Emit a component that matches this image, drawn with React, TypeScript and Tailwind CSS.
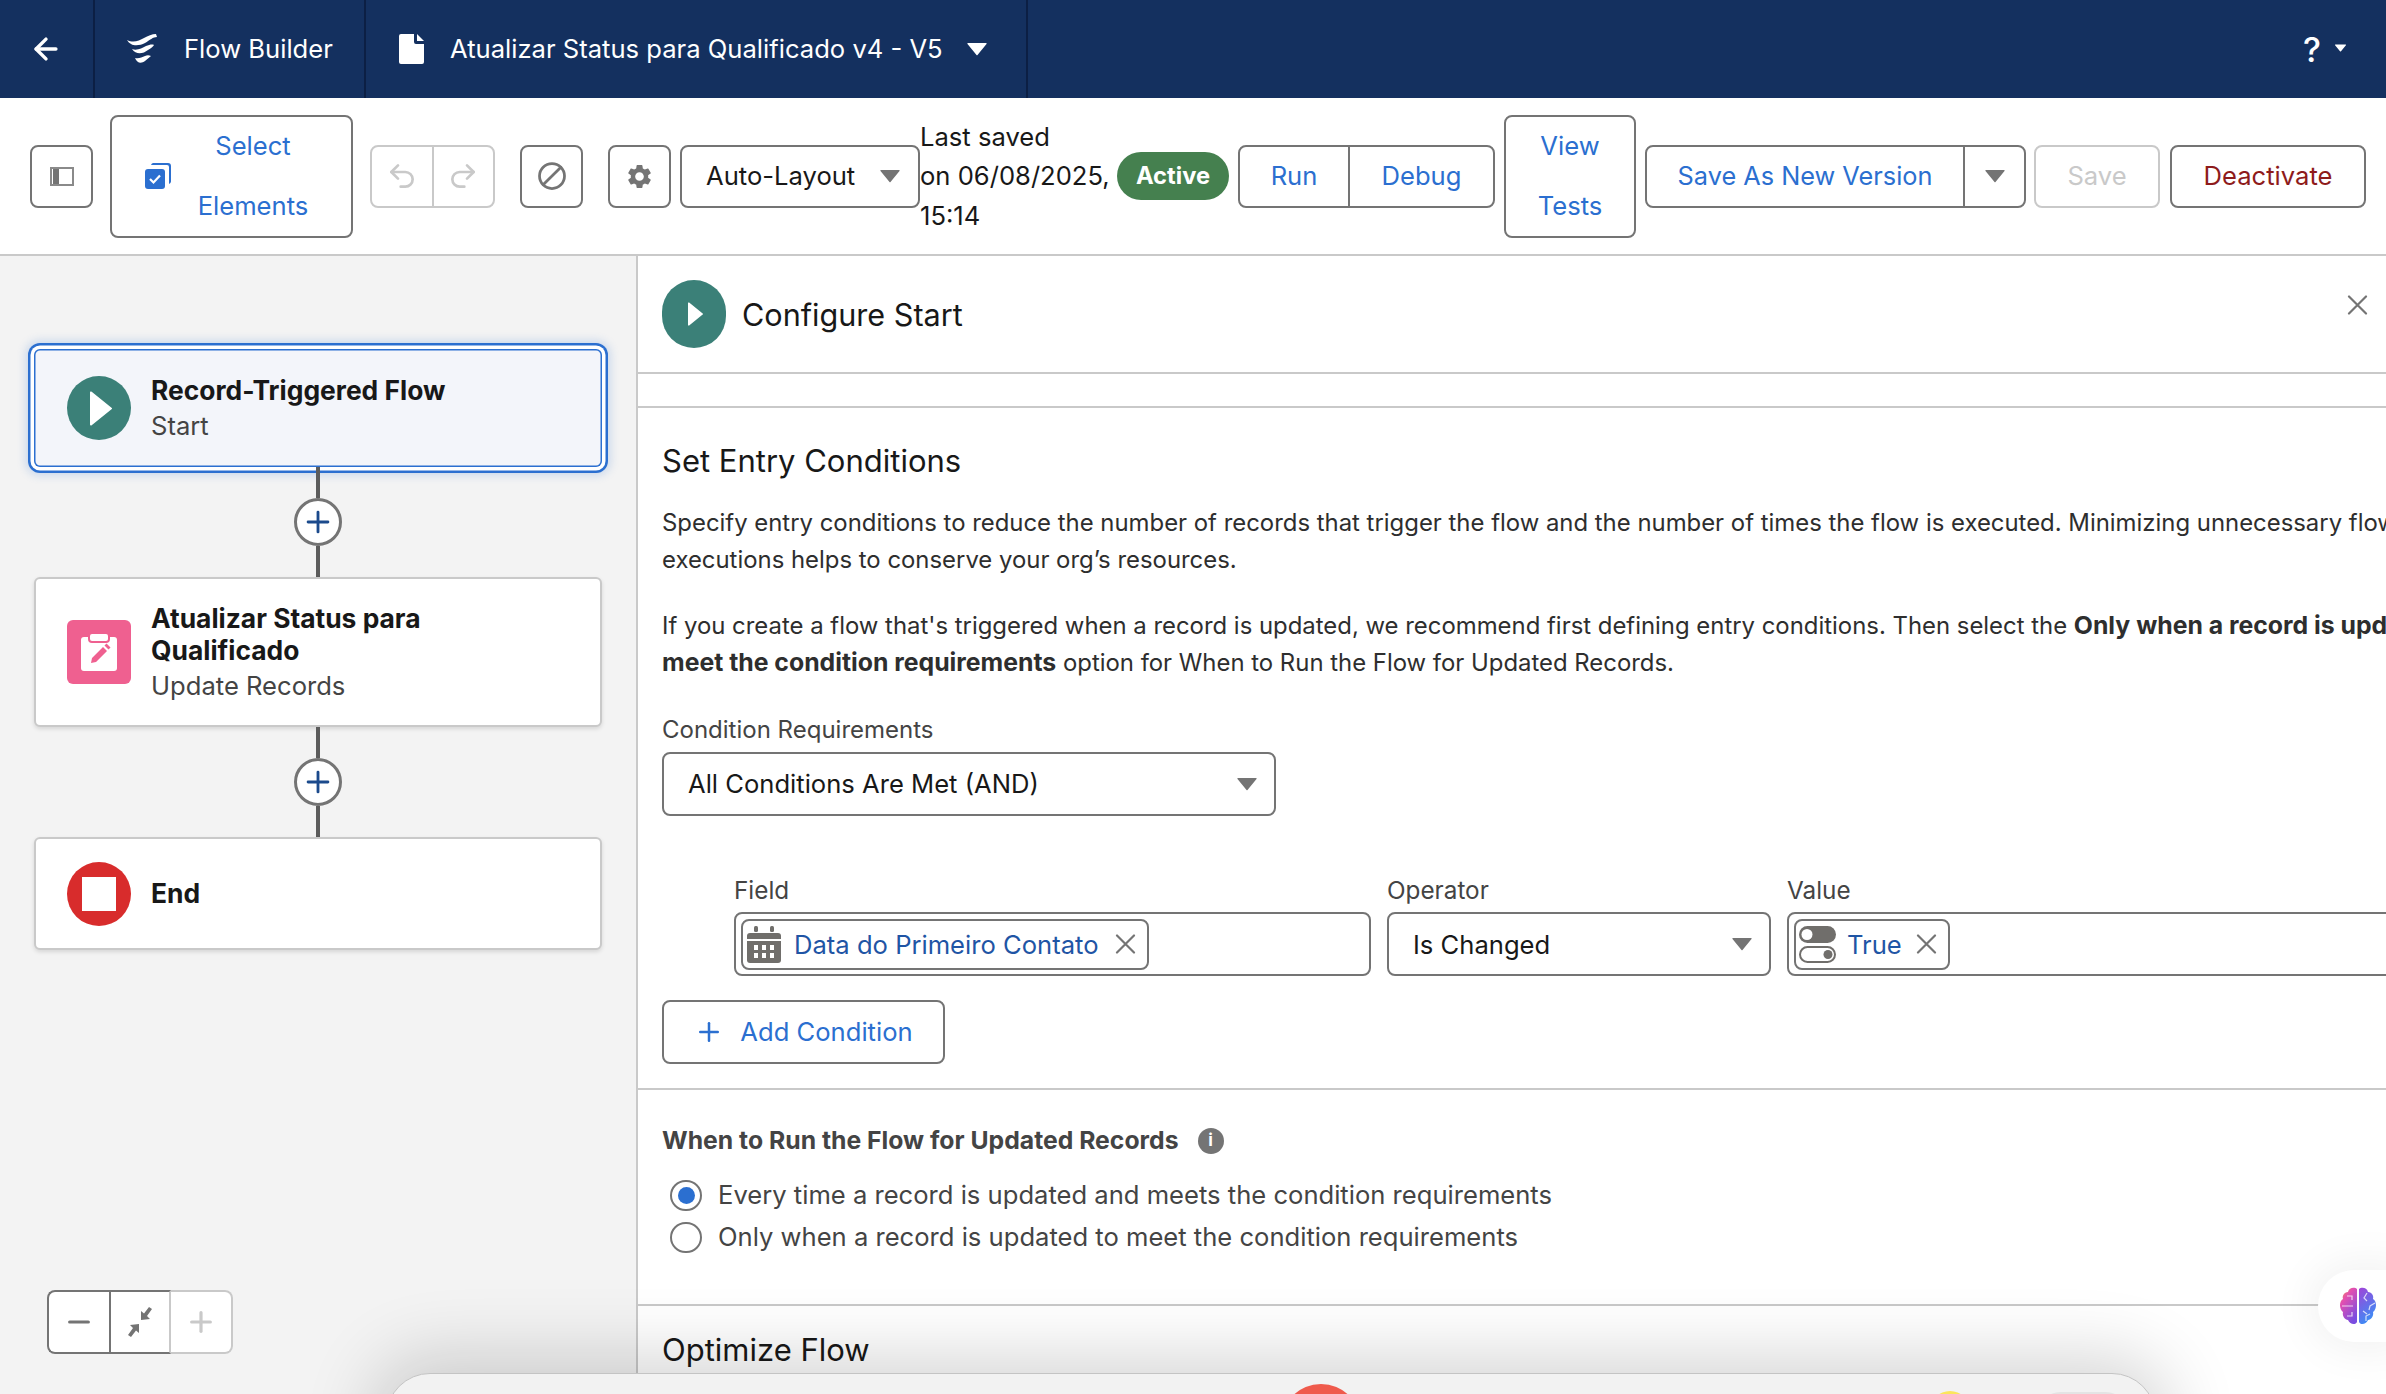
import { ArrowLeft, Ban, Minus, Plus, Redo2, Undo2 } from 'lucide-react'
import { MdSettings } from 'react-icons/md'

const BOX = 'flex items-center rounded-[8px] border-2 border-[#747474] bg-white'
const BTN = `${BOX} justify-center`

function Caret({ className }: { className: string }) {
  return (
    <svg viewBox="0 0 20 14" className={className} fill="currentColor">
      <path d="M1 1h18a.6.6 0 0 1 .5 1L10.500 13a.7.7 0 0 1-1 0L.5 2A.6.6 0 0 1 1 1z" />
    </svg>
  )
}

function CrossIcon({ className }: { className: string }) {
  return (
    <svg viewBox="0 0 21 20" className={className} fill="none" stroke="#747474" strokeWidth="2.200" strokeLinecap="round">
      <path d="M2 1.500l17 17M19 1.500l-17 17" />
    </svg>
  )
}

function PlayIcon({ className }: { className: string }) {
  return (
    <svg viewBox="0 0 22 35" className={className} fill="white">
      <path d="M0 1.500v32a1 1 0 0 0 1.700.7L21.500 18.300a1 1 0 0 0 0-1.600L1.700.8A1 1 0 0 0 0 1.500z" />
    </svg>
  )
}

function FlowLogo() {
  return (
    <svg viewBox="0 0 30 30" className="h-[30px] w-[30px]" fill="white">
      <path d="M0 6C6 9 12 7 17 4 21 2 25 0 29 0l1 3c-4 0-7 3-12 6C12 12 4 13 0 6z" />
      <path d="M5 15c5 2 10-1 14-3 3-1 6-2 8-1-1 2-3 3-6 5-5 4-12 5-16-1z" />
      <path d="M8 24c4 1 7-1 10-2 2-1 4-1 6 0-2 2-4 3-6 5-4 3-8 2-10-3z" />
    </svg>
  )
}

function AddNode() {
  return (
    <div className="flex flex-col items-center">
      <div className="h-[31px] w-[4px] bg-[#5c5c5c]" />
      <div className="flex size-[48px] items-center justify-center rounded-full border-[3px] border-[#747474] bg-white">
        <Plus className="size-[34px] text-[#1b4a8c]" strokeWidth={2} />
      </div>
      <div className="h-[31px] w-[4px] bg-[#5c5c5c]" />
    </div>
  )
}

function Calendar() {
  return (
    <svg viewBox="0 0 34 37" className="h-[37px] w-[34px] shrink-0" fill="#706e6b">
      <rect x="7" y="0" width="4" height="6" rx="1.5" />
      <rect x="23" y="0" width="4" height="6" rx="1.5" />
      <path d="M0 10a3 3 0 0 1 3-3h28a3 3 0 0 1 3 3v3H0z" />
      <path d="M0 15h34v19a3 3 0 0 1-3 3H3a3 3 0 0 1-3-3z" />
      <g fill="white">
        <rect x="7" y="19" width="4" height="5" />
        <rect x="15" y="19" width="4" height="5" />
        <rect x="23" y="19" width="4" height="5" />
        <rect x="7" y="27" width="4" height="5" />
        <rect x="15" y="27" width="4" height="5" />
        <rect x="23" y="27" width="4" height="5" />
      </g>
    </svg>
  )
}

function Toggles() {
  return (
    <svg viewBox="0 0 37 37" className="h-[37px] w-[37px] shrink-0">
      <rect x="0" y="0" width="37" height="17" rx="8.5" fill="#706e6b" />
      <circle cx="8" cy="8.5" r="5.5" fill="white" />
      <rect x="1" y="21" width="35" height="15" rx="7.5" fill="white" stroke="#706e6b" strokeWidth="2" />
      <circle cx="29" cy="28.5" r="4.5" fill="#706e6b" />
    </svg>
  )
}

function Brain() {
  return (
    <svg viewBox="0 0 38 38" className="h-[38px] w-[38px]">
      <defs>
        <linearGradient id="brainLeft" x1="0" y1="0" x2="0.6" y2="1">
          <stop offset="0" stopColor="#f59a3c" />
          <stop offset="0.35" stopColor="#e34fb0" />
          <stop offset="1" stopColor="#7a4de0" />
        </linearGradient>
        <linearGradient id="brainRight" x1="0" y1="0" x2="0.4" y2="1">
          <stop offset="0" stopColor="#a044d8" />
          <stop offset="1" stopColor="#3d8cf5" />
        </linearGradient>
      </defs>
      <path d="M18 2c-2-2-8-2-9 3-4 0-6 4-5 7-4 2-4 10 0 13-1 4 2 8 5 8 2 5 8 5 9 2z" fill="url(#brainLeft)" />
      <path d="M20 2c2-2 8-2 9 3 4 0 6 4 5 7 4 2 4 10 0 13 1 4-2 8-5 8-2 5-8 5-9 2z" fill="url(#brainRight)" />
      <g stroke="white" strokeOpacity="0.75" strokeWidth="1.2" fill="none">
        <path d="M3 19h11M8 9h5v4M8 29h5v-4" />
        <path d="M28 6l-3 5 3 3M36 16l-5 3-1 4M27 34l0-5 4-2M24 24l4 3" />
      </g>
    </svg>
  )
}

export default function App() {
  return (
    <div className="relative flex h-[1394px] w-[2386px] flex-col overflow-hidden bg-white text-[25.6px] text-[#181818] [font-family:Inter,'Noto_Sans',sans-serif]">
      <header className="flex h-[98px] shrink-0 items-stretch bg-[#14305f] text-white">
        <div className="flex w-[95px] items-center justify-center border-r-2 border-[#0c1f44] pr-[2px]">
          <ArrowLeft className="size-[34px]" strokeWidth={2.4} />
        </div>
        <div className="flex w-[271px] items-center gap-[27px] border-r-2 border-[#0c1f44] pl-[32px]">
          <FlowLogo />
          <span>Flow Builder</span>
        </div>
        <div className="flex w-[662px] items-center border-r-2 border-[#0c1f44] pl-[33px]">
          <svg viewBox="0 0 25 30" className="h-[30px] w-[25px]" fill="white">
            <path d="M2 0h13v8a2 2 0 0 0 2 2h8v18a2 2 0 0 1-2 2H2a2 2 0 0 1-2-2V2a2 2 0 0 1 2-2z" />
            <path d="M18 0l7 7h-7z" />
          </svg>
          <span className="ml-[26px]">Atualizar Status para Qualificado v4 - V5</span>
          <Caret className="ml-[24px] h-[14px] w-[20px]" />
        </div>
        <div className="ml-auto flex items-center pr-[39px]">
          <span className="text-[34px] font-medium">?</span>
          <Caret className="ml-[13px] mb-[2px] h-[8px] w-[13px]" />
        </div>
      </header>

      <div className="flex h-[158px] shrink-0 items-center border-b-2 border-[#c9c9c9] pl-[30px]">
        <button className={`${BTN} h-[63px] w-[63px]`}>
          <svg viewBox="0 0 24 19" className="h-[19px] w-[24px]">
            <rect x="1" y="1" width="22" height="17" fill="white" stroke="#8a8a8a" strokeWidth="2" />
            <rect x="3" y="2" width="6" height="15" fill="#747474" />
          </svg>
        </button>
        <button className={`${BTN} ml-[17px] h-[123px] w-[243px] pl-[33px] pr-[16px] text-[#2b6fd0]`}>
          <svg viewBox="0 0 26 26" className="h-[26px] w-[26px] shrink-0" fill="#2b6fd0">
            <path d="M8 0h15a3 3 0 0 1 3 3v15a3 3 0 0 1-2 3V4a2 2 0 0 0-2-2H6a3 3 0 0 1 2-2z" />
            <rect x="0" y="6" width="20" height="20" rx="3" />
            <path d="M5 16l3.500 3.500L15 12.500" fill="none" stroke="white" strokeWidth="2.2" />
          </svg>
          <span className="flex-1 text-center leading-[60px]">
            Select
            <br />
            Elements
          </span>
        </button>
        <div className="ml-[17px] flex h-[63px] w-[125px] rounded-[8px] border-2 border-[#c9c9c9] bg-white text-[#c9c9c9]">
          <div className="flex flex-1 items-center justify-center border-r-2 border-[#c9c9c9]">
            <Undo2 className="size-[32px]" strokeWidth={2} />
          </div>
          <div className="flex flex-1 items-center justify-center">
            <Redo2 className="size-[32px]" strokeWidth={2} />
          </div>
        </div>
        <button className={`${BTN} ml-[25px] h-[63px] w-[63px] text-[#747474]`}>
          <Ban className="size-[30px] -scale-x-100" strokeWidth={2.2} />
        </button>
        <button className={`${BTN} ml-[25px] h-[63px] w-[63px] text-[#747474]`}>
          <MdSettings className="size-[29px]" />
        </button>
        <div className={`${BOX} ml-[9px] h-[63px] w-[240px] justify-between pl-[24px] pr-[18px]`}>
          <span>Auto-Layout</span>
          <Caret className="h-[14px] w-[20px] text-[#747474]" />
        </div>
        <div className="w-[197px] whitespace-nowrap leading-[39.500px]">
          Last saved
          <br />
          on 06/08/2025,
          <br />
          15:14
        </div>
        <span className="flex h-[48px] w-[112px] items-center justify-center rounded-full bg-[#45804f] text-[23.7px] font-bold text-white">
          Active
        </span>
        <div className="ml-[9px] flex h-[63px] w-[257px] rounded-[8px] border-2 border-[#747474] text-[#2b6fd0]">
          <span className="flex w-[110px] items-center justify-center border-r-2 border-[#747474]">Run</span>
          <span className="flex flex-1 items-center justify-center">Debug</span>
        </div>
        <button className={`${BTN} ml-[9px] h-[123px] w-[132px] text-[#2b6fd0]`}>
          <span className="text-center leading-[60px]">
            View
            <br />
            Tests
          </span>
        </button>
        <div className="ml-[9px] flex h-[63px] w-[381px] rounded-[8px] border-2 border-[#747474] text-[25.3px] text-[#2b6fd0]">
          <span className="flex w-[318px] items-center justify-center border-r-2 border-[#747474]">
            Save As New Version
          </span>
          <span className="flex flex-1 items-center justify-center">
            <Caret className="h-[14px] w-[20px] text-[#747474]" />
          </span>
        </div>
        <button className="ml-[8px] flex h-[63px] w-[126px] items-center justify-center rounded-[8px] border-2 border-[#c9c9c9] text-[#c9c9c9]">
          Save
        </button>
        <button className={`${BTN} ml-[10px] h-[63px] w-[196px] text-[#8e1b1b]`}>Deactivate</button>
      </div>

      <main className="flex min-h-0 flex-1">
        <section className="relative flex w-[638px] shrink-0 flex-col items-stretch border-r-2 border-[#c9c9c9] bg-[#f3f3f3] pl-[34px] pr-[34px] pt-[93px]">
          <div className="flex h-[118px] items-center rounded-[6px] bg-[#f3f5fa] pl-[33px] shadow-[inset_0_0_0_1.5px_#2b6fd0,0_0_0_3.5px_#fff,0_0_0_6px_#2b6fd0,0_0_10px_8px_rgba(43,111,208,0.22)]">
            <div className="flex h-[64px] w-[64px] items-center justify-center rounded-full bg-[#3b8078]">
              <PlayIcon className="ml-[4px] h-[35px] w-[22px]" />
            </div>
            <div className="ml-[20px] leading-[36px]">
              <div className="text-[26.4px] font-bold">Record-Triggered Flow</div>
              <div className="text-[#444]">Start</div>
            </div>
          </div>
          <AddNode />
          <div className="flex h-[150px] items-center rounded-[6px] border-2 border-[#c9c9c9] bg-white pl-[31px] shadow-[0_2px_4px_rgba(0,0,0,0.12)]">
            <div className="flex h-[64px] w-[64px] items-center justify-center rounded-[6px] bg-[#ef6090]">
              <svg viewBox="0 0 36 38" className="h-[38px] w-[36px]">
                <path d="M3 4h30a3 3 0 0 1 3 3v28a3 3 0 0 1-3 3H3a3 3 0 0 1-3-3V7a3 3 0 0 1 3-3z" fill="white" />
                <rect x="8" y="0" width="20" height="9" rx="3" fill="white" stroke="#ef6090" strokeWidth="2" />
                <path d="M10 30l1-5 11-11 4 4-11 11z M23.500 12.500l2-2 4 4-2 2z" fill="#ef6090" />
              </svg>
            </div>
            <div className="ml-[20px] leading-[32px]">
              <div className="text-[26.4px] font-bold">
                Atualizar Status para
                <br />
                Qualificado
              </div>
              <div className="mt-[4px] text-[#444]">Update Records</div>
            </div>
          </div>
          <AddNode />
          <div className="flex h-[113px] items-center rounded-[6px] border-2 border-[#c9c9c9] bg-white pl-[31px] shadow-[0_2px_4px_rgba(0,0,0,0.12)]">
            <div className="flex h-[64px] w-[64px] items-center justify-center rounded-full bg-[#d82c2c]">
              <div className="size-[34px] bg-white" />
            </div>
            <div className="ml-[20px] text-[26.4px] font-bold">End</div>
          </div>
          <div className="absolute left-[47px] top-[1034px] flex h-[64px] w-[186px] rounded-[8px] bg-white">
            <div className="flex w-[62px] items-center justify-center rounded-l-[8px] border-2 border-r-0 border-[#747474]">
              <Minus className="size-[32px] text-[#747474]" strokeWidth={2.4} />
            </div>
            <div className="flex w-[62px] items-center justify-center border-x-2 border-y-2 border-[#747474] border-r-[#c9c9c9]">
              <svg viewBox="0 0 26 32" className="h-[32px] w-[26px]" fill="#747474">
                <path d="M14 14V5l3 2.500L22 1l3 2-5 7 3 3z" />
                <path d="M12 18v9l-3-2.500L4 31l-3-2 5-7-3-3z" />
              </svg>
            </div>
            <div className="flex flex-1 items-center justify-center rounded-r-[8px] border-2 border-l-0 border-[#c9c9c9]">
              <Plus className="size-[32px] text-[#c9c9c9]" strokeWidth={2.4} />
            </div>
          </div>
        </section>

        <section className="relative min-w-0 flex-1 overflow-hidden text-[#2e2e2e]">
          <div className="flex h-[118px] items-center border-b-2 border-[#c9c9c9] pl-[24px]">
            <div className="flex h-[68px] w-[64px] items-center justify-center rounded-full bg-[#3b8078]">
              <PlayIcon className="ml-[3px] h-[24px] w-[15px]" />
            </div>
            <span className="ml-[16px] pt-[2px] text-[30.600px] text-[#181818]">Configure Start</span>
            <CrossIcon className="absolute right-[18px] top-[39px] h-[20px] w-[21px]" />
          </div>
          <div className="h-[34px] border-b-2 border-[#c9c9c9]" />
          <div className="pl-[24px]">
            <h2 className="mt-[33px] text-[31px] leading-[40px] text-[#181818]">Set Entry Conditions</h2>
            <p className="mt-[23px] whitespace-nowrap text-[23.9px] leading-[37px]">
              Specify entry conditions to reduce the number of records that trigger the flow and the number of times the flow is executed. Minimizing unnecessary flow
              <br />
              executions helps to conserve your org’s resources.
            </p>
            <p className="mt-[29px] whitespace-nowrap text-[23.9px] leading-[37px]">
              If you create a flow that's triggered when a record is updated, we recommend first defining entry conditions. Then select the <b className="text-[24.8px]">Only when a record is updated to</b>
              <br />
              <b className="text-[24.8px]">meet the condition requirements</b> option for When to Run the Flow for Updated Records.
            </p>
            <div className="mt-[34px] text-[24px] leading-[30px] text-[#444]">Condition Requirements</div>
            <div className={`${BOX} mt-[7px] h-[64px] w-[614px] justify-between pl-[24px] pr-[17px] text-[#181818]`}>
              <span className="pt-[1px]">All Conditions Are Met (AND)</span>
              <Caret className="h-[14px] w-[20px] text-[#747474]" />
            </div>
            <div className="mt-[59px] flex pl-[72px]">
              <div className="w-[637px] shrink-0">
                <div className="text-[24.3px] leading-[30px] text-[#444]">Field</div>
                <div className="mt-[7px] flex h-[64px] items-center rounded-[8px] border-2 border-[#747474] pl-[5px]">
                  <div className="flex h-[51px] w-[408px] items-center rounded-[8px] border-2 border-[#747474] pl-[4px]">
                    <Calendar />
                    <span className="ml-[13px] whitespace-nowrap pt-[2px] text-[#1f55a5]">Data do Primeiro Contato</span>
                    <CrossIcon className="ml-[16px] h-[20px] w-[21px] shrink-0" />
                  </div>
                </div>
              </div>
              <div className="ml-[16px] w-[384px] shrink-0">
                <div className="text-[24.3px] leading-[30px] text-[#444]">Operator</div>
                <div className={`${BOX} mt-[7px] h-[64px] justify-between pl-[24px] pr-[17px] text-[#181818]`}>
                  <span className="pt-[2px]">Is Changed</span>
                  <Caret className="h-[14px] w-[20px] text-[#747474]" />
                </div>
              </div>
              <div className="ml-[16px] w-[700px] shrink-0">
                <div className="text-[24.3px] leading-[30px] text-[#444]">Value</div>
                <div className="mt-[7px] flex h-[64px] items-center rounded-[8px] border-2 border-[#747474] pl-[5px]">
                  <div className="flex h-[51px] w-[156px] items-center rounded-[8px] border-2 border-[#747474] pl-[3px]">
                    <Toggles />
                    <span className="ml-[11px] pt-[2px] text-[#1f55a5]">True</span>
                    <CrossIcon className="ml-[14px] h-[20px] w-[21px] shrink-0" />
                  </div>
                </div>
              </div>
            </div>
            <button className={`${BTN} mt-[24px] h-[64px] w-[283px] gap-[16px] text-[#2b6fd0]`}>
              <Plus className="size-[30px]" strokeWidth={2} />
              <span className="pt-[1px]">Add Condition</span>
            </button>
          </div>
          <div className="mt-[24px] border-b-2 border-[#c9c9c9]" />
          <div className="pl-[24px]">
            <div className="mt-[32px] flex items-center text-[#444]">
              <span className="text-[24.75px] font-bold">When to Run the Flow for Updated Records</span>
              <span className="ml-[19px] flex h-[26px] w-[26px] items-center justify-center rounded-full bg-[#747474] text-[17px] font-bold leading-none text-white">
                i
              </span>
            </div>
            <label className="mt-[16px] flex h-[41px] items-center pl-[8px] text-[#444]">
              <span className="flex h-[31px] w-[32px] items-center justify-center rounded-full border-2 border-[#747474] bg-white">
                <span className="size-[17px] rounded-full bg-[#2b6fd0]" />
              </span>
              <span className="ml-[16px]">Every time a record is updated and meets the condition requirements</span>
            </label>
            <label className="flex h-[42px] items-center pl-[8px] text-[#444]">
              <span className="h-[31px] w-[32px] rounded-full border-2 border-[#747474] bg-white" />
              <span className="ml-[16px]">Only when a record is updated to meet the condition requirements</span>
            </label>
          </div>
          <div className="mt-[46px] border-b-2 border-[#c9c9c9]" />
          <h2 className="ml-[24px] mt-[24px] text-[31px] leading-[40px] text-[#181818]">Optimize Flow</h2>
        </section>
      </main>

      <div className="absolute left-[386px] top-[1373px] h-[120px] w-[1770px] overflow-hidden rounded-t-[44px] border border-[#c4c4c4] bg-[#f2f2f2] shadow-[0_-4px_70px_14px_rgba(0,0,0,0.16)]" />
      <div className="absolute left-[1281px] top-[1384px] size-[80px] rounded-full bg-[#ef5a4c]" />
      <div className="absolute left-[1930px] top-[1391px] size-[40px] rounded-full bg-[#fbe55c]" />
      <div className="absolute left-[2040px] top-[1392px] h-[40px] w-[86px] rounded-full bg-[#e4e4e4]" />
      <div className="absolute left-[2318px] top-[1270px] flex h-[72px] w-[80px] items-center rounded-l-[36px] bg-white pl-[21px] shadow-[0_0_40px_10px_rgba(0,0,0,0.05)]">
        <Brain />
      </div>
    </div>
  )
}
